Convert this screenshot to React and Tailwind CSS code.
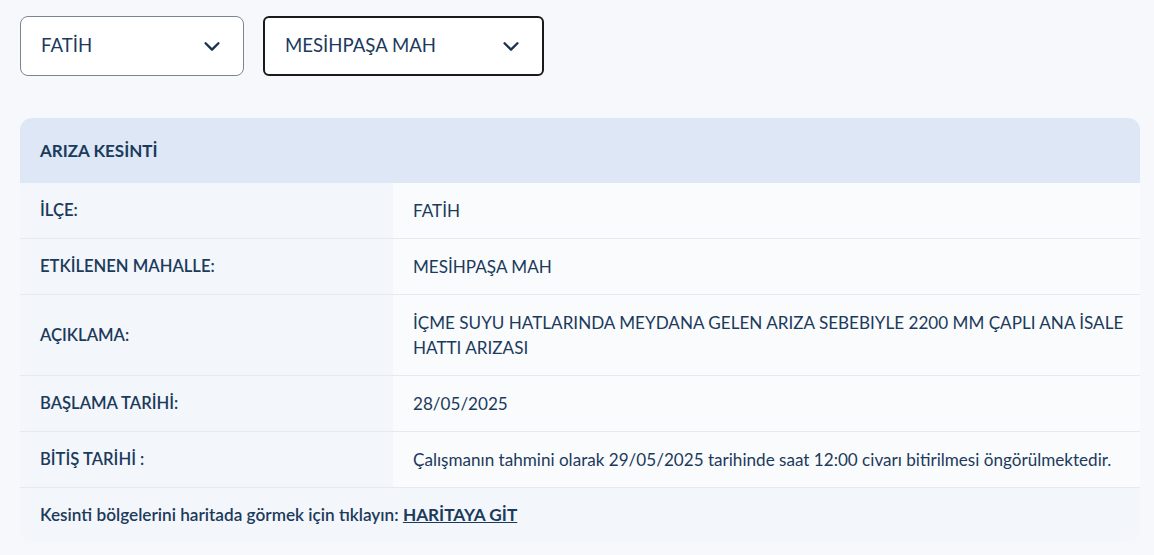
import React, { useState } from 'react';

const rows = [
  { label: 'İLÇE:', value: 'FATİH' },
  { label: 'ETKİLENEN MAHALLE:', value: 'MESİHPAŞA MAH' },
  {
    label: 'AÇIKLAMA:',
    value: 'İÇME SUYU HATLARINDA MEYDANA GELEN ARIZA SEBEBIYLE 2200 MM ÇAPLI ANA İSALE HATTI ARIZASI',
  },
  { label: 'BAŞLAMA TARİHİ:', value: '28/05/2025' },
  {
    label: 'BİTİŞ TARİHİ :',
    value: 'Çalışmanın tahmini olarak 29/05/2025 tarihinde saat 12:00 civarı bitirilmesi öngörülmektedir.',
  },
];

const Chevron = () => (
  <svg width="22" height="22" viewBox="0 0 24 24" fill="none" stroke="#1b3350" strokeWidth="2.6" strokeLinecap="round" strokeLinejoin="round">
    <path d="M5 9l7 7 7-7" />
  </svg>
);

const Select = ({ value, active, width }) => (
  <div
    className={`flex items-center justify-between h-[60px] pl-5 pr-5 rounded-lg bg-white ${width} ${
      active ? 'border-2 border-[#1a1a1a] rounded-md' : 'border border-[#7b8594]'
    }`}
  >
    <span className="text-[18.6px] text-[#1b3a5c]">{value}</span>
    <Chevron />
  </div>
);

export default function App() {
  const [district] = useState('FATİH');
  const [neighborhood] = useState('MESİHPAŞA MAH');

  return (
    <div
      className="min-h-[555px] bg-[#f6f8fc] px-5 pt-4 pb-4 text-[#1b3a5c]"
      style={{ fontFamily: 'Lato, "Noto Sans", sans-serif' }}
    >
      <div className="flex gap-[19px]">
        <Select value={district} width="w-[224px]" />
        <Select value={neighborhood} width="w-[281px]" active />
      </div>

      <div className="mt-[42px] w-[1120px] rounded-xl overflow-hidden bg-[#fafbfd]">
        <div className="h-[65px] flex items-center px-5 bg-[#dde7f5] text-[17px] font-bold text-[#1b3a5c]">
          ARIZA KESİNTİ
        </div>
        {rows.map((row) => (
          <div key={row.label} className="flex border-b border-[#e6eaf0]">
            <div className="w-[373px] shrink-0 bg-[#f3f6fa] px-5 flex items-center text-[16.6px] font-semibold">
              {row.label}
            </div>
            <div className="flex-1 pl-5 pr-[6px] py-[15px] min-h-[55px] flex items-center text-[17.1px] leading-[25px]">
              {row.value}
            </div>
          </div>
        ))}
        <div className="h-[54px] flex items-center px-5 bg-[#f3f6fa] text-[17.2px] font-semibold">
          Kesinti bölgelerini haritada görmek için tıklayın:&nbsp;
          <a href="#" className="underline font-bold text-[#1b3a5c]">
            HARİTAYA GİT
          </a>
        </div>
      </div>
    </div>
  );
}
